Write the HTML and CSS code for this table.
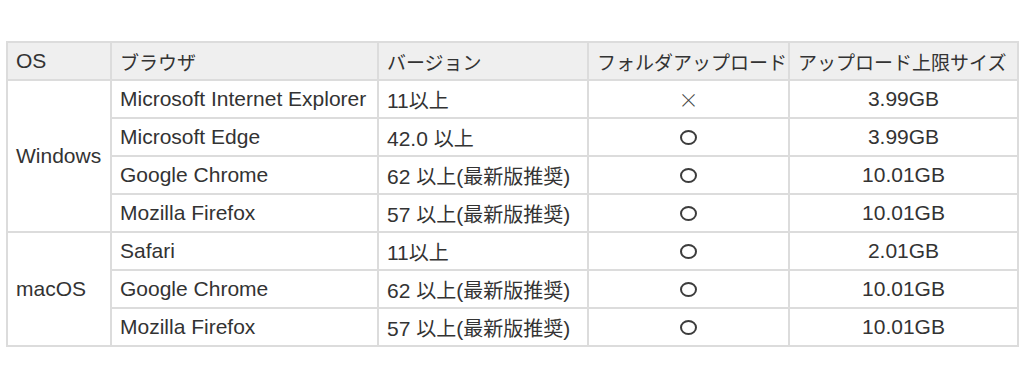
FILE: index.html
```html
<!DOCTYPE html>
<html lang="ja">
<head>
<meta charset="utf-8">
<link rel="stylesheet" href="styles.css">
</head>
<body>
<table class="spec">
  <colgroup>
    <col class="c-os"><col class="c-br"><col class="c-ver"><col class="c-folder"><col class="c-size">
  </colgroup>
  <thead>
    <tr><th>OS</th><th><span class="ja">ブラウザ</span></th><th><span class="ja">バージョン</span></th><th><span class="ja">フォルダアップロード</span></th><th><span class="ja">アップロード上限サイズ</span></th></tr>
  </thead>
  <tbody>
    <tr><td rowspan="4">Windows</td><td>Microsoft Internet Explorer</td><td>11<span class="ja">以上</span></td><td class="mid"><span class="mark">×</span></td><td class="mid">3.99GB</td></tr>
    <tr><td>Microsoft Edge</td><td>42.0 <span class="ja">以上</span></td><td class="mid"><span class="ok" role="img" aria-label="○"></span></td><td class="mid">3.99GB</td></tr>
    <tr><td>Google Chrome</td><td>62 <span class="ja">以上</span>(<span class="ja">最新版推奨</span>)</td><td class="mid"><span class="ok" role="img" aria-label="○"></span></td><td class="mid">10.01GB</td></tr>
    <tr><td>Mozilla Firefox</td><td>57 <span class="ja">以上</span>(<span class="ja">最新版推奨</span>)</td><td class="mid"><span class="ok" role="img" aria-label="○"></span></td><td class="mid">10.01GB</td></tr>
    <tr><td rowspan="3">macOS</td><td>Safari</td><td>11<span class="ja">以上</span></td><td class="mid"><span class="ok" role="img" aria-label="○"></span></td><td class="mid">2.01GB</td></tr>
    <tr><td>Google Chrome</td><td>62 <span class="ja">以上</span>(<span class="ja">最新版推奨</span>)</td><td class="mid"><span class="ok" role="img" aria-label="○"></span></td><td class="mid">10.01GB</td></tr>
    <tr><td>Mozilla Firefox</td><td>57 <span class="ja">以上</span>(<span class="ja">最新版推奨</span>)</td><td class="mid"><span class="ok" role="img" aria-label="○"></span></td><td class="mid">10.01GB</td></tr>
  </tbody>
</table>
</body>
</html>
```
FILE: styles.css
```css
html, body {
  margin: 0;
  background: #fff;
}
body {
  padding: 41px 0 0 6px;
  font-family: "Liberation Sans", "Noto Sans CJK JP", sans-serif;
  color: #333;
}
.spec {
  border-collapse: collapse;
  table-layout: fixed;
  width: 1011px;
  font-size: 21px;
}
.c-os { width: 104px; }
.c-br { width: 267px; }
.c-ver { width: 210px; }
.c-folder { width: 201px; }
.c-size { width: 229px; }
.spec th, .spec td {
  border: 2px solid #dcdcdc;
  height: 36px;
  padding: 0 8px;
  text-align: left;
  font-weight: normal;
  white-space: nowrap;
}
.spec th {
  background: #efefef;
}
.spec th:nth-child(4), .spec th:nth-child(5) {
  padding: 0 4px 0 8px;
}
.spec td.mid {
  text-align: center;
}
.ja {
  font-family: "Noto Sans CJK JP", sans-serif;
  font-size: 20px;
}
.spec th .ja {
  font-size: 19px;
}
.mark {
  font-family: "Noto Sans CJK JP", sans-serif;
  font-size: 20px;
  font-weight: 300;
  color: #444;
}
.ok {
  display: inline-block;
  width: 13px;
  height: 11px;
  border: 2px solid #3c3c3c;
  border-radius: 50%;
  vertical-align: -1px;
}
```
